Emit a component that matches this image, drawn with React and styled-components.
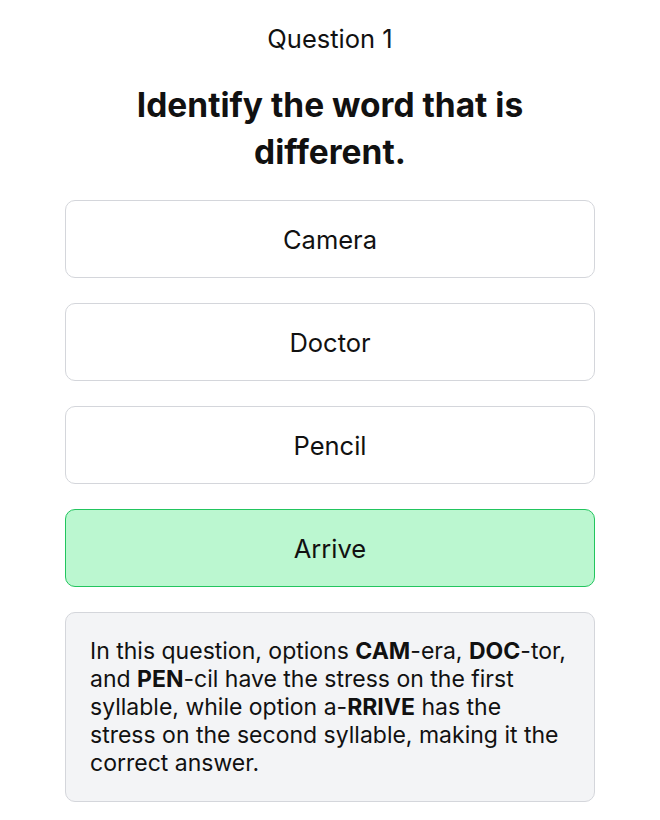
import React from 'react';
import styled, { createGlobalStyle } from 'styled-components';

const GlobalStyle = createGlobalStyle`
  body {
    margin: 0;
    background: #ffffff;
    font-family: Inter, "Noto Sans", sans-serif;
    color: #111111;
  }
`;

const Page = styled.main`
  padding: 23px 65px 20px 65px;
  display: flex;
  flex-direction: column;
`;

const QuestionLabel = styled.div`
  text-align: center;
  font-size: 25.5px;
  line-height: 32px;
  font-weight: 400;
`;

const Title = styled.h1`
  margin: 27px 0 24px 0;
  text-align: center;
  font-size: 33.5px;
  line-height: 47px;
  font-weight: 700;
  padding: 0 40px;
`;

const Options = styled.div`
  display: flex;
  flex-direction: column;
  gap: 25px;
`;

const Option = styled.button`
  height: 78px;
  border-radius: 10px;
  border: 1.5px solid ${props => (props.$correct ? '#22c55e' : '#d4d6db')};
  background: ${props => (props.$correct ? '#bbf7d0' : '#ffffff')};
  font-family: inherit;
  font-size: 25.5px;
  color: #111111;
  cursor: pointer;
`;

const Explanation = styled.div`
  margin-top: 25px;
  background: #f3f4f6;
  border: 1.5px solid #d4d6db;
  border-radius: 10px;
  padding: 24px 24px 24px 24px;
  font-size: 23px;
  line-height: 28px;

  b {
    font-weight: 700;
  }
`;

const options = [
  { label: 'Camera' },
  { label: 'Doctor' },
  { label: 'Pencil' },
  { label: 'Arrive', correct: true },
];

export default function App() {
  return (
    <>
      <GlobalStyle />
      <Page>
        <QuestionLabel>Question 1</QuestionLabel>
        <Title>Identify the word that is different.</Title>
        <Options>
          {options.map(o => (
            <Option key={o.label} $correct={o.correct}>{o.label}</Option>
          ))}
        </Options>
        <Explanation>
          In this question, options <b>CAM</b>-era, <b>DOC</b>-tor, and <b>PEN</b>-cil have the
          stress on the first syllable, while option a-<b>RRIVE</b> has the stress on the second
          syllable, making it the correct answer.
        </Explanation>
      </Page>
    </>
  );
}
